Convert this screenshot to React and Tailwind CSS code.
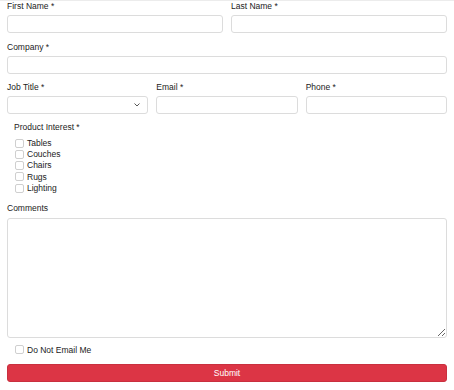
import React from 'react';

const Label = ({ children, className = '' }) => (
  <label className={`block text-[8.5px] leading-[10px] text-[#222] mb-[4px] ${className}`}>{children}</label>
);

const Input = () => (
  <input className="block w-full h-[18px] border border-[#dcdcdc] rounded-[3px] bg-white" />
);

const Check = ({ label }) => (
  <label className="flex items-center gap-[3px] h-[11.25px] text-[8.5px] text-[#222]">
    <span className="w-[9px] h-[9px] border border-[#cfcfcf] rounded-[2px] bg-white" />
    {label}
  </label>
);

export default function App() {
  return (
    <div className="w-[454px] h-[390px] bg-white px-[7px] border-t border-[#ececec]" style={{ fontFamily: '"Liberation Sans", Arial, sans-serif' }}>
      <div className="grid grid-cols-2 gap-x-[8px]">
        <div>
          <Label>First Name *</Label>
          <Input />
        </div>
        <div>
          <Label>Last Name *</Label>
          <Input />
        </div>
      </div>

      <div className="mt-[9px]">
        <Label>Company *</Label>
        <Input />
      </div>

      <div className="grid grid-cols-3 gap-x-[8px] mt-[8px]">
        <div>
          <Label>Job Title *</Label>
          <div className="relative h-[18px] border border-[#dcdcdc] rounded-[3px] bg-white">
            <svg className="absolute right-[7px] top-[6px]" width="6" height="4" viewBox="0 0 6 4" fill="none">
              <path d="M0.5 0.5 L3 3 L5.5 0.5" stroke="#444" strokeWidth="0.9" />
            </svg>
          </div>
        </div>
        <div>
          <Label>Email *</Label>
          <Input />
        </div>
        <div>
          <Label>Phone *</Label>
          <Input />
        </div>
      </div>

      <div className="pl-[7px] mt-[8px]">
        <Label className="mb-[5.5px]">Product Interest *</Label>
        <div className="pl-[1px] flex flex-col">
          <Check label="Tables" />
          <Check label="Couches" />
          <Check label="Chairs" />
          <Check label="Rugs" />
          <Check label="Lighting" />
        </div>
      </div>

      <div className="mt-[9px]">
        <Label className="mb-[5px]">Comments</Label>
        <textarea className="block w-full h-[120px] border border-[#dcdcdc] rounded-[3px] bg-white resize-y" />
      </div>

      <div className="pl-[8px] mt-[6.5px]">
        <Check label="Do Not Email Me" />
      </div>

      <button className="mt-[8.5px] w-full h-[18px] rounded-[3px] bg-[#dc3545] border border-[#c9303f] text-white text-[8.5px]">
        Submit
      </button>
    </div>
  );
}
